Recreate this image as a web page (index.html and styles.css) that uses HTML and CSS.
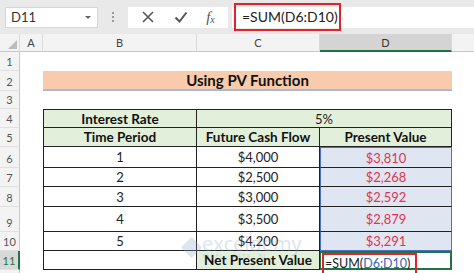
FILE: index.html
```html
<!DOCTYPE html>
<html>
<head>
<meta charset="utf-8">
<link rel="stylesheet" href="styles.css">
</head>
<body>
<div class="app">
  <div class="toolbar">
    <div class="namebox"><span>D11</span><span class="caret"></span></div>
    <div class="dots"><i></i><i></i><i></i></div>
    <div class="buttons">
      <svg class="ic" width="14" height="14" viewBox="0 0 14 14"><path d="M2 2 L12 12 M12 2 L2 12" stroke="#555" stroke-width="1.6" fill="none"/></svg>
      <svg class="ic" width="14" height="14" viewBox="0 0 14 14"><path d="M1.5 7.5 L5.5 11.5 L12.5 2.5" stroke="#555" stroke-width="2" fill="none"/></svg>
      <span class="fx">f<sub>x</sub></span>
    </div>
    <div class="formula">
      <span class="fbox">=SUM(D6:D10)</span>
    </div>
  </div>
  <div class="sheet">
    <div class="ch corner"><span class="tri"></span></div>
    <div class="ch">A</div>
    <div class="ch">B</div>
    <div class="ch">C</div>
    <div class="ch sel">D</div>
    <div class="ch last"></div>

    <div class="rh">1</div><div class="blank span5"></div>
    <div class="rh">2</div><div class="blank"></div><div class="banner">Using PV Function</div><div class="blank"></div>
    <div class="rh">3</div><div class="blank span5"></div>

    <div class="rh">4</div><div class="blank"></div>
    <div class="t g b first top">Interest Rate</div>
    <div class="t g span2 top">5%</div>
    <div class="blank"></div>

    <div class="rh">5</div><div class="blank"></div>
    <div class="t g b first">Time Period</div>
    <div class="t g b">Future Cash Flow</div>
    <div class="t g b">Present Value</div>
    <div class="blank"></div>

    <div class="rh">6</div><div class="blank"></div>
    <div class="t first">1</div><div class="t">$4,000</div><div class="t pv s-top">$3,810</div><div class="blank"></div>
    <div class="rh">7</div><div class="blank"></div>
    <div class="t first">2</div><div class="t">$2,500</div><div class="t pv">$2,268</div><div class="blank"></div>
    <div class="rh">8</div><div class="blank"></div>
    <div class="t first">3</div><div class="t">$3,000</div><div class="t pv">$2,592</div><div class="blank"></div>
    <div class="rh">9</div><div class="blank"></div>
    <div class="t first">4</div><div class="t">$3,500</div><div class="t pv">$2,879</div><div class="blank"></div>
    <div class="rh">10</div><div class="blank"></div>
    <div class="t first">5</div><div class="t">$4,200</div><div class="t pv s-bot">$3,291</div><div class="blank"></div>

    <div class="rh active">11</div><div class="blank"></div>
    <div class="t first"></div>
    <div class="t g b">Net Present Value</div>
    <div class="t active-cell"><span class="cbox">=SUM(<span class="ref">D6:D10</span>)</span></div>
    <div class="blank"></div>

    <div class="rh"></div><div class="blank span5"></div>

    <div class="wm"><span class="logo"></span><span class="wm-text">exceldemy<small>EXCEL · DATA · BI</small></span></div>
  </div>
</div>
</body>
</html>
```
FILE: styles.css
```css
* { box-sizing: border-box; }
html, body { margin: 0; padding: 0; background: #fff; }
body { width: 474px; height: 273px; overflow: hidden; font-family: "Lato", "Open Sans", sans-serif; }
.app { width: 474px; }

.toolbar {
  height: 34px;
  background: #e9e9e9;
  display: flex;
  align-items: center;
  padding-left: 5px;
}
.namebox {
  width: 93px; height: 21px;
  background: #fff;
  border: 1px solid #d6d6d6;
  display: flex; align-items: center; justify-content: space-between;
  padding: 0 6px 0 5px;
  font-size: 13px; color: #333;
}
.caret {
  width: 0; height: 0;
  border-left: 3px solid transparent; border-right: 3px solid transparent;
  border-top: 3px solid #666;
}
.dots { width: 30px; display: flex; flex-direction: column; align-items: center; gap: 2px; }
.dots i { width: 2px; height: 2px; background: #9a9a9a; display: block; }
.buttons {
  width: 100px; height: 21px; background: #fff;
  display: flex; align-items: center; justify-content: space-around;
  padding: 0 4px;
}
.fx { font-family: "Liberation Serif", serif; font-style: italic; font-size: 15px; color: #555; line-height: 1; }
.fx sub { font-size: 10px; vertical-align: -1px; }
.formula {
  flex: 1; height: 21px; margin-left: 4px; background: #fff;
  display: flex; align-items: center; position: relative;
}
.fbox {
  position: absolute; left: 2px; top: -4px;
  width: 107px; height: 28px;
  border: 2px solid #e0242a;
  font-size: 14px; color: #222;
  padding-left: 6px; line-height: 23px;
}

.sheet {
  position: relative;
  display: grid;
  grid-template-columns: 20px 23px 154px 123px 132px 1fr;
  grid-template-rows: 18px 19px 20px 18px 19px 19px 21px 19px 20px 25px 19px 19px 10px;
}
.ch {
  background: #f3f3f3;
  border-right: 1px solid #dadada;
  border-bottom: 1px solid #c8c8c8;
  font-size: 11px; color: #444;
  display: flex; align-items: center; justify-content: center;
}
.ch.corner { position: relative; }
.tri {
  position: absolute; right: 2px; bottom: 2px;
  width: 0; height: 0;
  border-left: 9px solid transparent; border-bottom: 9px solid #bdbdbd;
}
.ch.sel { background: #d4d4d4; border-bottom: 2px solid #217346; color: #333; }
.ch.last { border-right: none; }
.rh {
  background: #f3f3f3;
  border-right: 1px solid #c8c8c8;
  border-bottom: 1px solid #e0e0e0;
  font-size: 11px; color: #555;
  display: flex; align-items: flex-end; justify-content: center; padding-bottom: 2px;
}
.rh.active { background: #d8d8d8; border-right: 2px solid #217346; color: #217346; }
.blank { background: #fff; }
.span5 { grid-column: span 5; }
.span2 { grid-column: span 2; }
.banner {
  grid-column: span 3;
  background: #f8cbad;
  border-bottom: 2px solid #a9b8d6;
  font-weight: 700; font-size: 15px; color: #111;
  display: flex; align-items: center; justify-content: center;
}
.t {
  border-right: 1px solid #222;
  border-bottom: 1px solid #222;
  font-size: 13px; color: #222;
  display: flex; align-items: center; justify-content: center;
  background: #fff;
}
.t.first { border-left: 1px solid #222; }
.t.top { border-top: 1px solid #222; }
.t.g { background: #e2efda; }
.t.b { font-weight: 700; font-size: 13.5px; color: #111; }
.t.pv {
  background: #dfe6f1; color: #e0344f;
  border-left: 1px solid #4a72c0; border-right: 1px solid #4a72c0;
}
.t.s-top { border-top: 1px solid #4a72c0; }
.t.s-bot { border-bottom: 1px solid #4a72c0; }
.active-cell {
  position: relative;
  justify-content: flex-start;
  border: 2px solid #217346;
  border-left: 1px solid #217346;
}
.cbox {
  position: absolute; left: 1px; top: 0; width: 95px; height: 24px;
  border: 2px solid #e0242a;
  font-size: 12.5px; color: #222; line-height: 17px; padding-left: 1px;
  z-index: 2;
}
.ref { color: #3a63b5; }

.wm {
  position: absolute; left: 184px; top: 201px;
  display: flex; align-items: center; gap: 3px;
  opacity: 0.28; pointer-events: none;
}
.logo { width: 15px; height: 15px; background: #8ea3c8; transform: rotate(45deg); border-radius: 2px; }
.wm-text { display: flex; flex-direction: column; font-size: 20px; color: #7f9cc9; line-height: 18px; font-family: "Open Sans", sans-serif; }
.wm-text small { font-size: 6px; line-height: 7px; letter-spacing: 1px; }
```
